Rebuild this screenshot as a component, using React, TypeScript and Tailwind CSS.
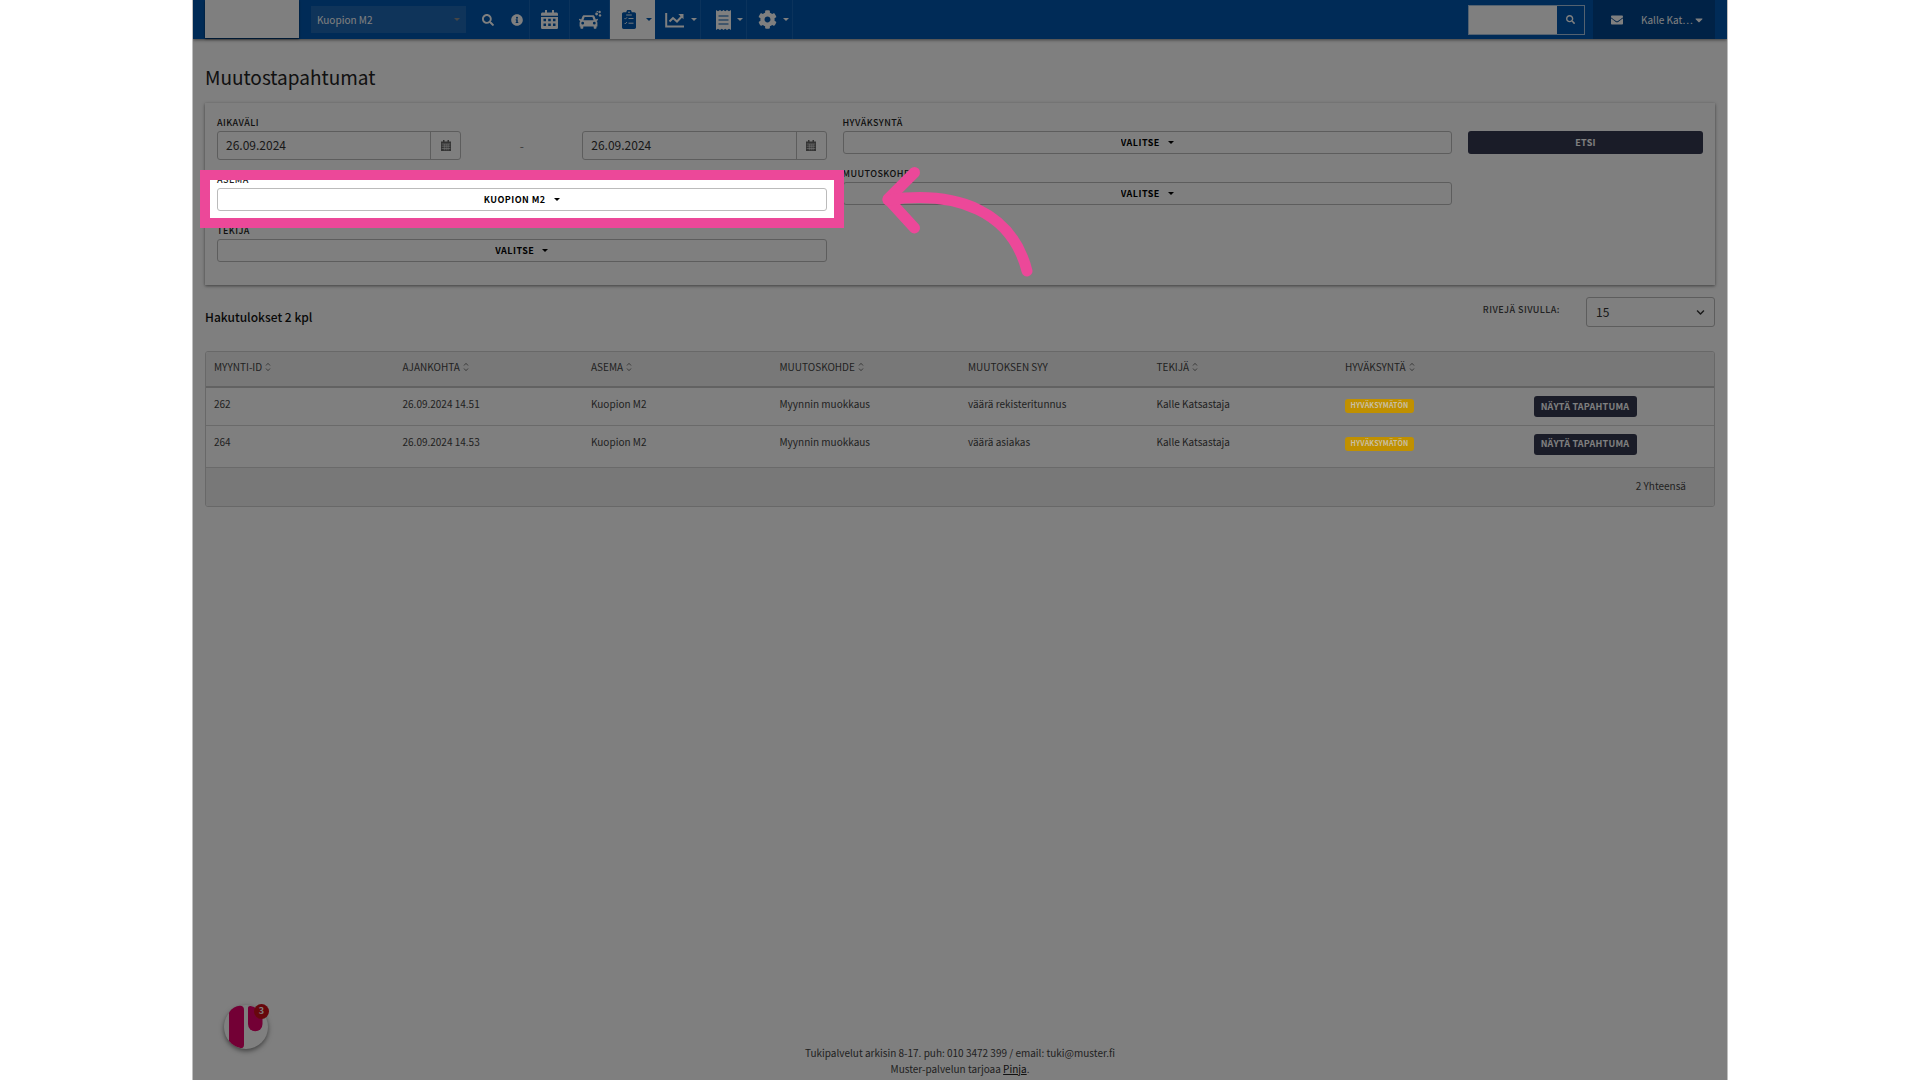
import type { ReactNode } from 'react'
import {
  FaCaretDown,
  FaChevronDown,
  FaCog,
  FaEnvelope,
  FaInfoCircle,
  FaSearch,
} from 'react-icons/fa'

const rows = [
  { id: '262', time: '26.09.2024 14.51', station: 'Kuopion M2', target: 'Myynnin muokkaus', reason: 'väärä rekisteritunnus', author: 'Kalle Katsastaja' },
  { id: '264', time: '26.09.2024 14.53', station: 'Kuopion M2', target: 'Myynnin muokkaus', reason: 'väärä asiakas', author: 'Kalle Katsastaja' },
]

const columns = [
  { label: 'Myynti-ID', sortable: true },
  { label: 'Ajankohta', sortable: true },
  { label: 'Asema', sortable: true },
  { label: 'Muutoskohde', sortable: true },
  { label: 'Muutoksen syy', sortable: false },
  { label: 'Tekijä', sortable: true },
  { label: 'Hyväksyntä', sortable: true },
]

function CarIcon() {
  return (
    <svg viewBox="0 0 24 20" className="w-6 h-5" fill="currentColor" aria-hidden="true">
      <path fillRule="evenodd" d="M6.2 5.200h8.600c.9 0 1.500.5 1.800 1.300l1.200 3.100 1.700-.8c.7.6.6 1.300 0 1.700l-.9.5c.6.5.8 1.100.8 1.900v3.600h-.9v1.300c0 .7-.4 1-1 1h-.8c-.7 0-1-.4-1-1v-1.300H5.300v1.300c0 .7-.4 1-1 1h-.9c-.6 0-1-.4-1-1v-1.300h-.8v-3.600c0-.8.3-1.400.8-1.900l-.9-.5c-.7-.4-.7-1.100 0-1.700l1.700.8 1.200-3.100c.3-.8.9-1.300 1.800-1.300Zm.4 1.900-1.200 3.200h10.200l-1.200-3.200ZM4.700 11.800a1.400 1.400 0 1 0 0 2.800 1.400 1.400 0 0 0 0-2.800Zm11.600 0a1.400 1.400 0 1 0 0 2.800 1.400 1.400 0 0 0 0-2.800Z" />
      <circle cx="18.600" cy="4" r="1.400" />
      <circle cx="21.600" cy="2" r="1.200" />
      <circle cx="22" cy="5.400" r="1.200" />
      <circle cx="19.300" cy="1.400" r=".7" />
    </svg>
  )
}

function CalendarIcon() {
  return (
    <svg viewBox="0 0 17 19" className="w-[17px] h-[19px]" aria-hidden="true">
      <path fill="currentColor" fillRule="evenodd" d="M4 0h2v2.400h5V0h2v2.400h2.400c.9 0 1.600.7 1.600 1.600v1.800H0V4c0-.9.7-1.600 1.600-1.600H4ZM0 7h17v10.400c0 .9-.7 1.600-1.600 1.600H1.600C.7 19 0 18.300 0 17.400ZM2.500 8.800v2.400H5V8.800Zm4.700 0v2.400h2.600V8.800Zm4.800 0v2.400h2.500V8.800ZM2.500 13.600V16H5v-2.400Zm4.700 0V16h2.600v-2.400Zm4.800 0V16h2.500v-2.400Z" />
    </svg>
  )
}

function ClipboardIcon() {
  return (
    <svg viewBox="0 0 14 19" className="w-[14px] h-[19px]" aria-hidden="true">
      <path fill="currentColor" d="M1.700 2.300h2.600a2.700 2.700 0 0 1 5.400 0h2.600c1 0 1.700.7 1.700 1.700v13.300c0 1-.7 1.700-1.700 1.700H1.700c-1 0-1.700-.7-1.700-1.700V4c0-1 .7-1.700 1.700-1.700Z" />
      <path fill="none" stroke="white" strokeWidth="0.900" d="m2.600 8.300.8.8 1.500-1.700M6.500 8.500h5M2.600 13l.8.8 1.500-1.700M6.500 13.200h5M4.200 5h5.600" />
      <circle cx="7" cy="2.300" r=".8" fill="white" />
    </svg>
  )
}

function ChartIcon() {
  return (
    <svg viewBox="0 0 20 16" className="w-5 h-4" fill="none" stroke="currentColor" strokeWidth="2" aria-hidden="true">
      <path d="M1.200 1v13.500H19M4.500 9.500l3.500-3.500 4 3.500 5-5.200" />
      <path fill="currentColor" stroke="none" d="M13.300 2H18.500v5.200Z" />
    </svg>
  )
}

function ReceiptIcon() {
  return (
    <svg viewBox="0 0 15 20" className="w-[15px] h-5" aria-hidden="true">
      <path fill="currentColor" d="m0 0 2 1.300L4 0l1.800 1.300L7.500 0l1.700 1.300L11 0l2 1.300L15 0v20l-2-1.300-2 1.300-1.800-1.300L7.500 20l-1.700-1.300L4 20l-2-1.300L0 20Z" />
      <path stroke="#0057ae" strokeWidth="1.200" d="M2.500 6h10M2.500 10h10M2.500 14h10" />
    </svg>
  )
}

function SortIcon() {
  return (
    <svg viewBox="0 0 6 10" className="w-[6px] h-[10px]" fill="none" stroke="#777" strokeWidth="1" aria-hidden="true">
      <path d="m1 3.500 2-2.200 2 2.200M1 6.500l2 2.200 2-2.200" />
    </svg>
  )
}

function SmallCalendarIcon() {
  return (
    <svg viewBox="0 0 10 11" className="w-[10px] h-[11px]" aria-hidden="true">
      <path fill="#666" d="M2 0h1.500v1.500h3V0H8v1.500h2V11H0V1.500h2Z" />
      <path stroke="#eee" strokeWidth=".6" d="M.7 4h8.600M.7 6.200h8.600M.7 8.500h8.600M3.300 4v6.300M5.200 4v6.300M7.100 4v6.300" />
    </svg>
  )
}

function Caret() {
  return (
    <svg viewBox="0 0 6 3" className="w-[6px] h-[3px] shrink-0" fill="currentColor" aria-hidden="true">
      <path d="M0 0h6L3 3Z" />
    </svg>
  )
}

function NavItem({ label, icon, caret = false, active = false }: { label: string; icon: ReactNode; caret?: boolean; active?: boolean }) {
  return (
    <button
      type="button"
      aria-label={label}
      className={
        active
          ? 'h-full w-[45px] flex items-center justify-end gap-[10px] pr-[3px] bg-white text-[#0057ae]'
          : caret
            ? 'h-full w-[46px] flex items-center justify-end gap-[6px] pr-[3px] border-r border-[#1767b8]'
            : 'h-full w-10 flex items-center justify-center border-r border-[#1767b8]'
      }
    >
      {icon}
      {caret && <Caret />}
    </button>
  )
}

function Navbar() {
  return (
    <header className="relative h-[39px] bg-[#0057ae] text-white shadow-[0_1px_3px_rgba(0,0,0,0.5)] flex items-center justify-between px-3">
      <div className="flex items-center h-full">
        <div className="w-[94px] h-[38px] mb-px bg-white shadow-[0_1px_2px_rgba(0,0,0,0.6)]" />
        <div className="ml-3 w-[155px] h-[27px] bg-[#1e68b4] flex items-center px-[6px]">
          <select aria-label="Toimipiste" className="appearance-none w-full text-[10px] leading-4 outline-none">
            <option>Kuopion M2</option>
          </select>
          <span className="text-[#8c8c8c]"><Caret /></span>
        </div>
        <button type="button" aria-label="Haku" className="ml-4"><FaSearch size={12} /></button>
        <button type="button" aria-label="Tietoja" className="ml-[17px]"><FaInfoCircle size={12} /></button>
        <div className="ml-[6px] h-full flex border-l border-[#1767b8]">
          <NavItem label="Kalenteri" icon={<CalendarIcon />} />
          <NavItem label="Katsastus" icon={<CarIcon />} />
          <NavItem label="Tapahtumat" icon={<ClipboardIcon />} caret active />
          <NavItem label="Raportit" icon={<ChartIcon />} caret />
          <NavItem label="Laskut" icon={<ReceiptIcon />} caret />
          <NavItem label="Asetukset" icon={<FaCog size={19} />} caret />
        </div>
      </div>
      <div className="flex items-center h-full">
        <form className="flex h-[30px] border border-[#a9c4e0]">
          <input type="search" aria-label="Hae" className="w-[88px] bg-white outline-none" />
          <button type="button" aria-label="Hae" className="w-[27px] flex items-center justify-center">
            <FaSearch size={9} />
          </button>
        </form>
        <div className="ml-2 h-full w-[122px] bg-[#00448c] flex items-center pl-[18px]">
          <FaEnvelope size={12} />
          <button type="button" className="ml-[18px] flex items-center text-[10px] leading-4">
            Kalle Kat… <FaCaretDown size={12} />
          </button>
        </div>
      </div>
    </header>
  )
}

function DropdownField({ id, label, value, children }: { id: string; label: string; value: string; children?: ReactNode }) {
  return (
    <div className="relative">
      <label htmlFor={id} className="block h-4 text-[9px] leading-4 font-medium uppercase tracking-wider text-[#222]">{label}</label>
      <div className="h-[23px] rounded-[3px] border border-[#bbb] bg-white flex items-center justify-center gap-2 text-black">
        <select id={id} className="appearance-none text-[9px] leading-4 font-bold uppercase tracking-wider outline-none">
          <option>{value}</option>
        </select>
        <Caret />
      </div>
      {children}
    </div>
  )
}

function DateInput({ id, label }: { id: string; label: string }) {
  return (
    <div className="flex-1 h-[29px] flex rounded-[3px] border border-[#bbb] text-[#333]">
      <input id={id} aria-label={label} defaultValue="26.09.2024" className="min-w-0 flex-1 px-2 pb-[2px] text-xs leading-4 outline-none" />
      <button type="button" aria-label="Avaa kalenteri" className="w-[30px] border-l border-[#bbb] flex items-center justify-center">
        <SmallCalendarIcon />
      </button>
    </div>
  )
}

function Filters() {
  return (
    <section className="mt-[10px] px-3 pt-3 pb-[23px] bg-white shadow-[0_1px_3px_rgba(0,0,0,0.5)] flex gap-4">
      <div className="flex-1 flex flex-col gap-3">
        <div>
          <label htmlFor="start" className="block h-4 text-[9px] leading-4 font-medium uppercase tracking-wider text-[#222]">Aikaväli</label>
          <div className="flex items-center">
            <DateInput id="start" label="Alkaen" />
            <span className="w-[121px] text-center text-xs text-[#777]">-</span>
            <DateInput id="end" label="Päättyen" />
          </div>
        </div>
        <DropdownField id="station" label="Asema" value="Kuopion M2">
          {/* spotlight: everything outside the ring is dimmed */}
          <div className="absolute z-20 -top-[2px] -bottom-[17px] -inset-x-[17px] border-[10px] border-[#ec4899] shadow-[0_0_0_2400px_rgba(0,0,0,0.5)] pointer-events-none" />
          <svg viewBox="0 0 160 120" className="absolute z-30 left-full top-[-10px] ml-[49px] w-[160px] h-[120px] pointer-events-none" fill="none" stroke="#ec4899" strokeWidth="11" strokeLinecap="round" strokeLinejoin="round" aria-hidden="true">
            <path d="M38.500 10.500 12 37l26.500 29" />
            <path d="M12 38C82 28 136 50 151 109" />
          </svg>
        </DropdownField>
        <DropdownField id="author" label="Tekijä" value="Valitse" />
      </div>
      <div className="flex-1 flex flex-col gap-3">
        <DropdownField id="approval" label="Hyväksyntä" value="Valitse" />
        <DropdownField id="target" label="Muutoskohde" value="Valitse" />
      </div>
      <div className="w-[235px] pt-4">
        <button type="button" className="block w-full h-[23px] rounded-[3px] bg-[#343850] text-white text-[9px] leading-4 font-bold uppercase tracking-wide">Etsi</button>
      </div>
    </section>
  )
}

function Results() {
  return (
    <section>
      <div className="mt-3 flex items-start justify-between">
        <h2 className="mt-3 text-xs leading-4 font-medium text-[#111]">Hakutulokset 2 kpl</h2>
        <div className="flex items-start">
          <label htmlFor="page-size" className="mt-[5px] text-[9px] leading-4 font-medium uppercase tracking-wider text-[#444]">Rivejä sivulla:</label>
          <div className="ml-[26px] w-[129px] h-[30px] rounded-[3px] border border-[#bbb] flex items-center px-[9px] text-[#333]">
            <select id="page-size" className="appearance-none flex-1 text-xs leading-4 outline-none">
              <option>15</option>
            </select>
            <FaChevronDown size={9} />
          </div>
        </div>
      </div>
      <div className="mt-6 rounded-[3px] border border-[#d0d0d0] overflow-hidden">
        <table className="w-full table-fixed border-collapse text-left text-[10px] leading-4 text-[#444]">
          <thead className="bg-[#f1f1f1]">
            <tr className="h-[35px] border-b-2 border-[#c4c4c4]">
              {columns.map((column) => (
                <th key={column.label} scope="col" className="pl-2 pb-1 font-normal uppercase">
                  <span className="flex items-center gap-[3px]">
                    {column.label}
                    {column.sortable && <SortIcon />}
                  </span>
                </th>
              ))}
              <th aria-label="Toiminnot" />
            </tr>
          </thead>
          <tbody className="align-top">
            {rows.map((row) => (
              <tr key={row.id} className="h-[38px] border-b border-[#d4d4d4] last:h-[42px]">
                <td className="pl-2 pt-2">{row.id}</td>
                <td className="pl-2 pt-2">{row.time}</td>
                <td className="pl-2 pt-2">{row.station}</td>
                <td className="pl-2 pt-2">{row.target}</td>
                <td className="pl-2 pt-2">{row.reason}</td>
                <td className="pl-2 pt-2">{row.author}</td>
                <td className="pl-2 pt-[11px]">
                  <span className="relative z-30 block w-[69px] h-[14px] rounded-[3px] bg-[#c09000] text-center text-[7px] leading-3 font-bold uppercase tracking-wide text-[#c8bfa4]">Hyväksymätön</span>
                </td>
                <td className="pl-2 pt-2">
                  <button type="button" className="block w-[103px] h-[21px] rounded-[3px] bg-[#343850] text-white text-[9px] leading-4 font-bold uppercase tracking-wide whitespace-nowrap">Näytä tapahtuma</button>
                </td>
              </tr>
            ))}
          </tbody>
          <tfoot className="bg-[#f1f1f1]">
            <tr className="h-[39px]">
              <td colSpan={8} className="pr-7 pb-[2px] text-right">2 Yhteensä</td>
            </tr>
          </tfoot>
        </table>
      </div>
    </section>
  )
}

function ChatBubble() {
  return (
    <button type="button" aria-label="Avaa chat" className="absolute left-[31px] bottom-[31px] size-11 rounded-full bg-white shadow-[0_2px_5px_rgba(0,0,0,0.5)]">
      <svg viewBox="0 0 44 44" className="size-11" aria-hidden="true">
        <path fill="#e6006a" d="M5 7.500C8 3 12 .8 16 .7c2.500 0 4 1.300 4 4v35c0 2.500-1.300 3.500-3.500 3.300C12 42 8 39.500 5 36Z" />
        <path fill="#e6006a" d="M24 3c0-1.500 1-2.200 2.500-2 6 1.300 10 4.500 12 9v9a7.250 7.250 0 0 1-14.500 0Z" />
      </svg>
      <span className="absolute -top-[1px] -right-[1px] size-[15px] rounded-full bg-[#cf0f18] text-white text-[9px] leading-[14px] font-bold">3</span>
    </button>
  )
}

export default function App() {
  return (
    <div className="min-h-screen bg-white font-['Noto_Sans_CJK_SC','Source_Sans_Pro',sans-serif]">
      <div className="relative w-4/5 min-h-screen mx-auto overflow-hidden bg-[#fefefe] border-x border-[#bfbfbf] flex flex-col">
        <Navbar />
        <main className="flex-1 px-3 pt-[22px]">
          <h1 className="text-[19px] leading-8 text-[#222]">Muutostapahtumat</h1>
          <Filters />
          <Results />
        </main>
        <footer className="pb-[3px] text-center text-[10px] leading-4 text-[#444]">
          <p>Tukipalvelut arkisin 8-17. puh: 010 3472 399 / email: tuki@muster.fi</p>
          <p>Muster-palvelun tarjoaa <a href="#pinja" className="underline text-[#222]">Pinja</a>.</p>
        </footer>
        <ChatBubble />
      </div>
    </div>
  )
}
